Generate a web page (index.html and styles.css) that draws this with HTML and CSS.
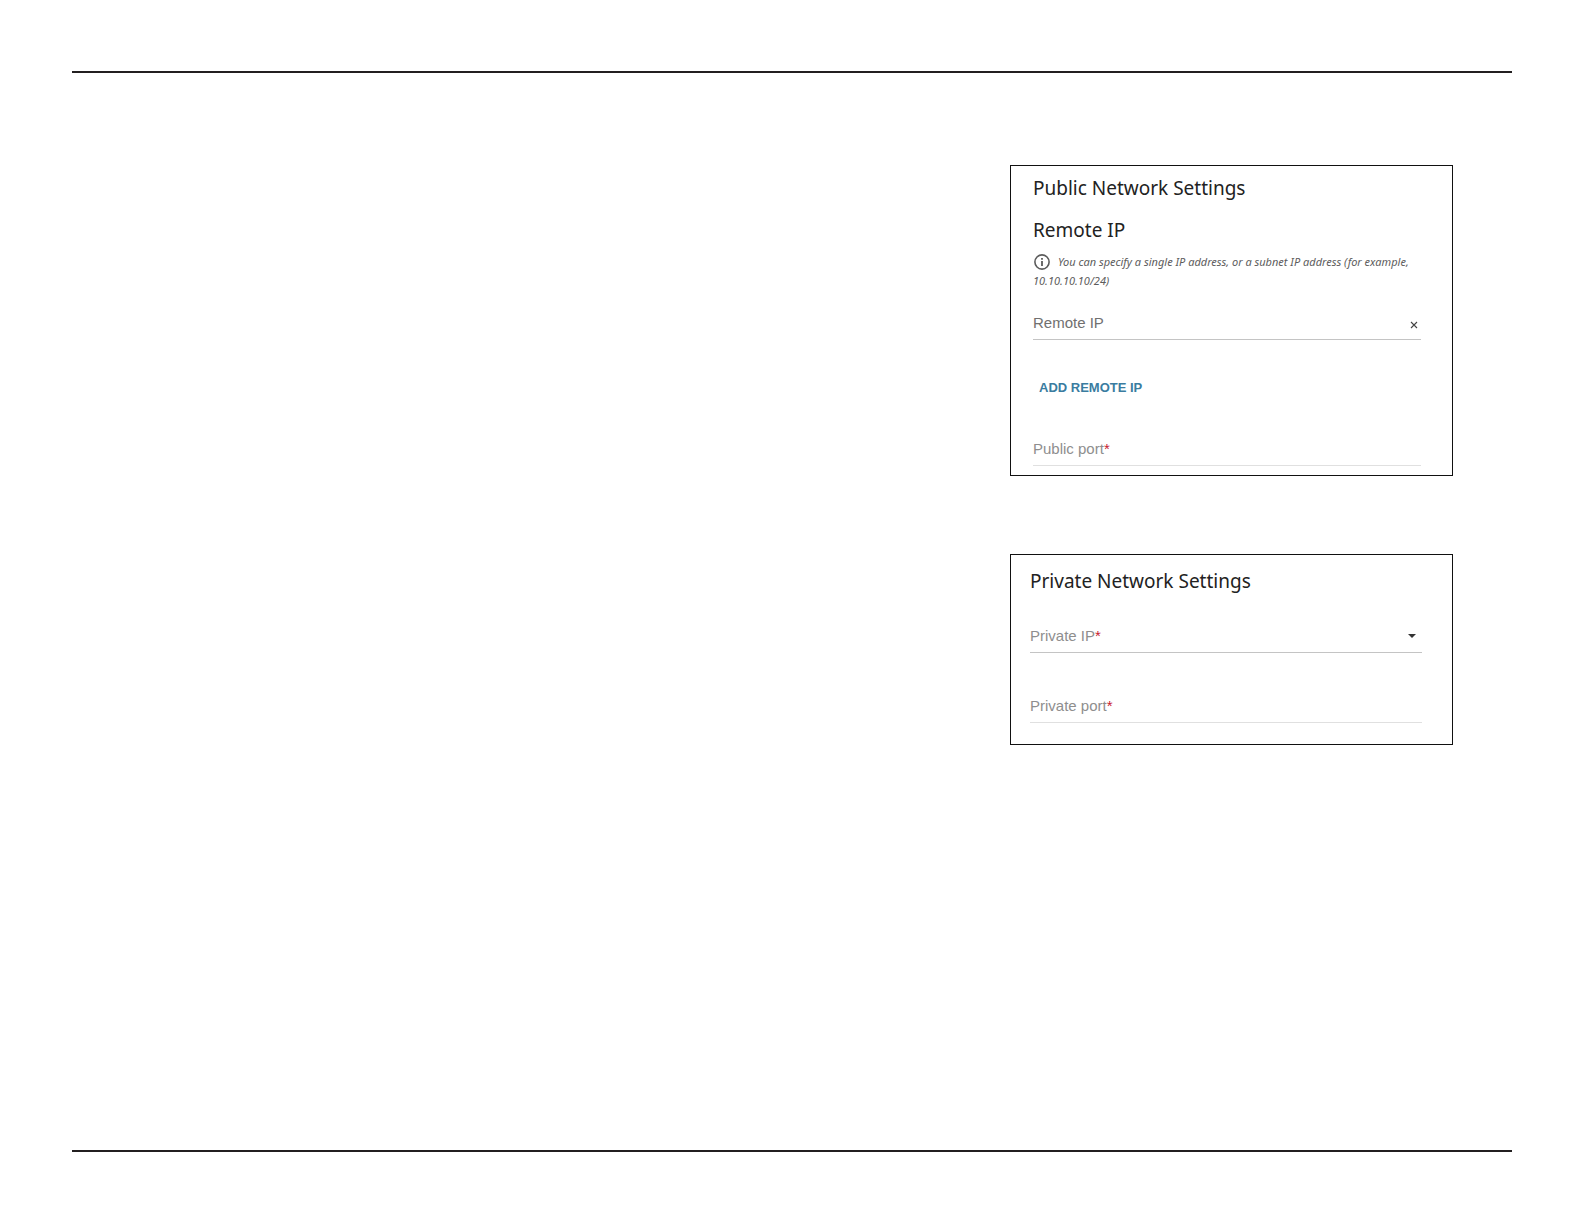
FILE: index.html
```html
<!DOCTYPE html>
<html lang="en">
<head>
<meta charset="utf-8">
<meta name="viewport" content="width=device-width, initial-scale=1">
<title>Network Settings</title>
<link rel="stylesheet" href="styles.css">
</head>
<body>
<main class="sheet">
  <div class="panels">
    <section class="panel panel-public">
      <h1 class="heading">Public Network Settings</h1>
      <h2 class="heading">Remote IP</h2>
      <p class="note"><svg class="info" viewBox="0 0 16 16" aria-hidden="true"><circle cx="8" cy="8" r="7.1" fill="none" stroke="currentColor" stroke-width="1.6"/><path d="M7.1 4h1.8v1.8H7.1zM7.1 7h1.8v5H7.1z" fill="currentColor"/></svg>You can specify a single IP address, or a subnet IP address (for example, 10.10.10.10/24)</p>
      <div class="field field-active">
        <label class="label" for="remote-ip">Remote IP</label>
        <input class="control" id="remote-ip" type="text">
        <button class="clear" type="button" aria-label="Clear"><svg class="cross" viewBox="0 0 8 8" aria-hidden="true"><path d="M1 1l6 6M7 1L1 7" fill="none" stroke="currentColor" stroke-width="1.1"/></svg></button>
      </div>
      <button class="add" type="button">ADD REMOTE IP</button>
      <div class="field">
        <label class="label" for="public-port">Public port<span class="required">*</span></label>
        <input class="control" id="public-port" type="text" required>
      </div>
    </section>
    <section class="panel panel-private">
      <h1 class="heading">Private Network Settings</h1>
      <div class="field field-select">
        <label class="label" for="private-ip">Private IP<span class="required">*</span></label>
        <select class="control" id="private-ip" required><option value=""></option></select>
        <svg class="arrow" viewBox="0 0 8 4" aria-hidden="true"><path d="M0 0h8L4 4z" fill="currentColor"/></svg>
      </div>
      <div class="field">
        <label class="label" for="private-port">Private port<span class="required">*</span></label>
        <input class="control" id="private-port" type="text" required>
      </div>
    </section>
  </div>
</main>
</body>
</html>
```
FILE: styles.css
```css
* { box-sizing: border-box; }

body {
  margin: 0;
  min-height: 100vh;
  padding: 71px 72px 72px;
  display: flex;
  background: #fff;
  font-family: "Liberation Sans", Arial, sans-serif;
}

.sheet {
  flex: 1;
  display: grid;
  grid-template-columns: minmax(0, 938fr) minmax(0, 443fr) minmax(0, 59fr);
  padding: 92px 0;
  border-top: 2px solid #231f20;
  border-bottom: 2px solid #231f20;
}

.panels {
  grid-column: 2;
  display: flex;
  flex-direction: column;
  gap: 78px;
}

.panel {
  display: flex;
  flex-direction: column;
  border: 1px solid #111;
}

.panel-public { padding: 8px 31px 9px 22px; }
.panel-private { padding: 12px 30px 21px 19px; }

.heading {
  margin: 0;
  font: 400 19px/28px "Noto Sans", sans-serif;
  color: #222;
}

.heading + .heading { margin-top: 14px; }

.note {
  margin: 8px 0 23px;
  font: italic 11px/19px "Noto Sans", sans-serif;
  color: #5c5c5c;
}

.info {
  width: 16px;
  height: 16px;
  margin: 0 8px 0 1px;
  vertical-align: -4px;
}

.field {
  display: flex;
  align-items: center;
  padding-bottom: 6px;
  border-bottom: 1px solid #e0e0e0;
}

.label {
  font-size: 15px;
  line-height: 20px;
  color: #8e8e8e;
}

.field-active { border-color: #c4c4c4; }
.field-active .label { color: #707070; }
.required { color: #c8202f; }

.control {
  flex: 1;
  min-width: 0;
  height: 20px;
  padding: 0;
  border: 0;
  outline: 0;
  background: transparent;
  font: inherit;
  appearance: none;
}

.clear {
  display: flex;
  padding: 5px 3px 1px;
  border: 0;
  background: none;
  color: #444;
}

.cross { width: 8px; height: 8px; }

.add {
  align-self: flex-start;
  margin: 38px 0 41px;
  padding: 0 6px;
  border: 0;
  background: none;
  font: 700 13px/20px "Liberation Sans", Arial, sans-serif;
  color: #3a7ca0;
}

.field-select {
  margin: 31px 0 43px;
  padding-right: 6px;
  border-color: #c4c4c4;
}

.arrow {
  width: 8px;
  height: 4px;
  color: #333;
}
```
